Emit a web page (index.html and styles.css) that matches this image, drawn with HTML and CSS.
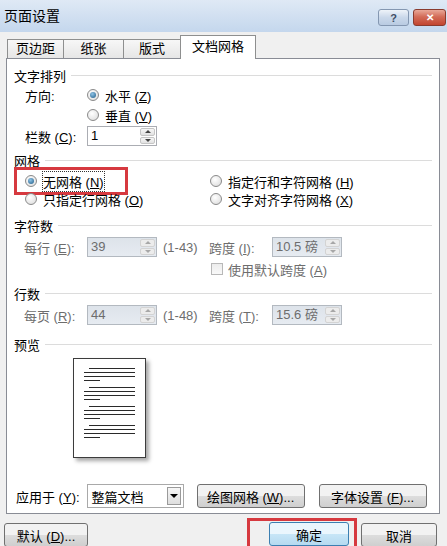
FILE: index.html
```html
<!DOCTYPE html>
<html lang="zh-CN">
<head>
    <meta charset="UTF-8">
    <title>页面设置</title>
    <link rel="stylesheet" href="styles.css">
</head>
<body>
<div class="dialog">
    <div class="titlebar">
        <span class="title">页面设置</span>
        <div class="caps">
            <span class="cap help">?</span>
            <span class="cap close">&#x2715;</span>
        </div>
    </div>

    <div class="tabs">
        <span class="tab tab-margins">页边距</span>
        <span class="tab tab-paper">纸张</span>
        <span class="tab tab-layout">版式</span>
        <span class="tab tab-grid active">文档网格</span>
    </div>

    <div class="panel">
        <div class="group-title">文字排列</div>
        <div class="row">
            <span class="label">方向:</span>
            <span class="option"><i class="radio checked"></i><span>水平 (<u>Z</u>)</span></span>
        </div>
        <div class="row">
            <span class="label"></span>
            <span class="option"><i class="radio"></i><span>垂直 (<u>V</u>)</span></span>
        </div>
        <div class="row row-field">
            <span class="label">栏数 (<u>C</u>):</span>
            <div class="spin">
                <span class="val">1</span>
                <span class="arrows"><i class="up"></i><i class="down"></i></span>
            </div>
        </div>

        <div class="group-title gap-grid">网格</div>
        <div class="grid-opts">
            <span class="highlight"><span class="option"><i class="radio checked"></i><span class="focus">无网格 (<u>N</u>)</span></span></span>
            <span class="option"><i class="radio"></i><span>指定行和字符网格 (<u>H</u>)</span></span>
            <span class="option"><i class="radio"></i><span>只指定行网格 (<u>O</u>)</span></span>
            <span class="option"><i class="radio"></i><span>文字对齐字符网格 (<u>X</u>)</span></span>
        </div>

        <div class="group-title gap-chars">字符数</div>
        <div class="metric disabled">
            <span>每行 (<u>E</u>):</span>
            <div class="spin off">
                <span class="val">39</span>
                <span class="arrows"><i class="up"></i><i class="down"></i></span>
            </div>
            <span class="range">(1-43)</span>
            <span>跨度 (<u>I</u>):</span>
            <div class="spin off">
                <span class="val">10.5 磅</span>
                <span class="arrows"><i class="up"></i><i class="down"></i></span>
            </div>
        </div>
        <div class="check-row disabled">
            <i class="checkbox"></i><span>使用默认跨度 (<u>A</u>)</span>
        </div>

        <div class="group-title gap-lines">行数</div>
        <div class="metric disabled">
            <span>每页 (<u>R</u>):</span>
            <div class="spin off">
                <span class="val">44</span>
                <span class="arrows"><i class="up"></i><i class="down"></i></span>
            </div>
            <span class="range">(1-48)</span>
            <span>跨度 (<u>T</u>):</span>
            <div class="spin off">
                <span class="val">15.6 磅</span>
                <span class="arrows"><i class="up"></i><i class="down"></i></span>
            </div>
        </div>

        <div class="group-title gap-preview">预览</div>
        <div class="page">
            <div class="para"><i class="ln first"></i><i class="ln"></i><i class="ln"></i><i class="ln last"></i></div>
            <div class="para"><i class="ln first"></i><i class="ln"></i><i class="ln"></i><i class="ln last"></i></div>
            <div class="para"><i class="ln first"></i><i class="ln"></i><i class="ln"></i><i class="ln last"></i></div>
            <div class="para"><i class="ln first"></i><i class="ln"></i><i class="ln"></i><i class="ln last"></i></div>
        </div>

        <div class="apply-row">
            <span>应用于 (<u>Y</u>):</span>
            <div class="select">
                <span class="val">整篇文档</span>
                <span class="drop"><i></i></span>
            </div>
            <button class="btn btn-wide">绘图网格 (<u>W</u>)...</button>
            <button class="btn btn-wide">字体设置 (<u>F</u>)...</button>
        </div>
    </div>

    <div class="footer">
        <button class="btn btn-default">默认 (<u>D</u>)...</button>
        <span class="highlight-ok"><button class="btn btn-ok">确定</button></span>
        <button class="btn btn-cancel">取消</button>
    </div>
</div>
</body>
</html>
```

FILE: styles.css
```css
* { margin: 0; padding: 0; box-sizing: border-box; }
body { font-family: "Liberation Sans", "Noto Sans CJK SC", sans-serif; font-size: 13px; color: #000; background: #f0f0f0; }
u { text-decoration: underline; }
i { font-style: normal; display: block; }

.dialog { width: 447px; height: 546px; background: #f0f0f0; display: flex; flex-direction: column; overflow: hidden; }

/* title bar */
.titlebar { height: 32px; flex-shrink: 0; display: flex; justify-content: space-between; background: linear-gradient(#dfe9f5, #c4d7ed); padding-left: 4px; }
.title { font-size: 14px; line-height: 32px; }
.caps { display: flex; gap: 4px; margin-top: 9px; margin-right: 1px; }
.cap { height: 17px; border-radius: 3px; display: flex; align-items: center; justify-content: center; font-size: 11px; font-weight: bold; }
.help { width: 31px; border: 1px solid #8497b1; background: linear-gradient(#eef3f9, #cad8ea 50%, #b9cbe2); color: #3f4e66; }
.close { width: 33px; border: 1px solid #8a3b2e; background: linear-gradient(#e9a898, #d36c58 45%, #c2452f); color: #fff; font-size: 10px; }

/* tabs */
.tabs { height: 26px; flex-shrink: 0; display: flex; align-items: flex-end; padding-left: 7px; }
.tab { height: 19px; border: 1px solid #8e8f8f; border-bottom: none; margin-right: -1px; background: linear-gradient(#f7f7f7, #e6e6e6); text-align: center; line-height: 18px; }
.tab-margins { width: 57px; }
.tab-paper { width: 61px; }
.tab-layout { width: 58px; }
.tab-grid { width: 76px; }
.tab.active { height: 24px; background: #fff; margin-bottom: -1px; line-height: 22px; position: relative; z-index: 1; }

/* panel */
.panel { margin-left: 6px; width: 434px; height: 456px; flex-shrink: 0; border: 1px solid #898c95; background: #fff; padding: 6px 7px 5px 7px; display: flex; flex-direction: column; }
.group-title { height: 20px; display: flex; align-items: center; }
.group-title::after { content: ""; flex: 1; border-top: 1px solid #dcdcdc; margin-left: 5px; }
.gap-grid { margin-top: 3px; }
.gap-chars { margin-top: 7px; }
.gap-lines { margin-top: 4px; }
.gap-preview { margin-top: 8px; }

.row { height: 20px; display: flex; align-items: center; padding-left: 11px; }
.row:first-of-type { margin-top: 1px; }
.row-field { height: 22px; }
.label { width: 62px; }

.option { display: flex; align-items: center; gap: 6px; white-space: nowrap; }
.radio { width: 12px; height: 12px; border-radius: 50%; border: 1px solid #8a8a8a; background: radial-gradient(circle at 40% 35%, #fff, #d9d9d9); display: flex; align-items: center; justify-content: center; flex-shrink: 0; }
.radio.checked::after { content: ""; width: 6px; height: 6px; border-radius: 50%; background: radial-gradient(circle at 40% 35%, #8ec3e6, #1f5b86); }

.grid-opts { display: grid; grid-template-columns: 185px 1fr; grid-auto-rows: 18px; align-items: center; padding-left: 11px; margin-top: 2px; }
.highlight { display: flex; align-items: center; width: 114px; height: 28px; margin-left: -11px; border: 3px solid #d6393f; padding-left: 8px; }
.focus { outline: 1px dotted #333; outline-offset: 0; }

/* spin boxes */
.spin { width: 70px; height: 20px; border: 1px solid #abadb3; display: flex; background: #fff; }
.spin .val { flex: 1; padding-left: 3px; line-height: 18px; white-space: nowrap; }
.arrows { width: 17px; display: flex; flex-direction: column; gap: 1px; padding: 1px; }
.arrows i { flex: 1; border: 1px solid #c5c5c5; border-radius: 2px; background: linear-gradient(#f6f6f6, #e2e2e2); display: flex; align-items: center; justify-content: center; }
.arrows .up::after { content: ""; border-left: 3px solid transparent; border-right: 3px solid transparent; border-bottom: 3px solid #444; }
.arrows .down::after { content: ""; border-left: 3px solid transparent; border-right: 3px solid transparent; border-top: 3px solid #444; }
.spin.off { background: linear-gradient(#dde3ea, #e6ebf1); border-color: #b3b9c0; }
.spin.off .arrows i { background: #ececec; border-color: #d3d3d3; }
.spin.off .arrows .up::after { border-bottom-color: #a7a7a7; }
.spin.off .arrows .down::after { border-top-color: #a7a7a7; }

.disabled { color: #6d6d6d; }
.metric { height: 22px; margin-top: 1px; display: grid; grid-template-columns: 63px 70px 52px 63px 70px; align-items: center; padding-left: 10px; }
.range { padding-left: 6px; }

.check-row { height: 20px; margin-top: 1px; display: flex; align-items: center; gap: 5px; padding-left: 197px; }
.checkbox { width: 12px; height: 12px; border: 1px solid #b8b8b8; background: linear-gradient(#ececec, #f9f9f9); }

/* preview */
.page { margin-top: 4px; margin-left: 59px; width: 73px; height: 100px; border: 1px solid #3c3c3c; background: #fff; box-shadow: 3px 3px 4px rgba(0, 0, 0, 0.35); padding: 9px 10px 0 10px; }
.para { margin-bottom: 6px; }
.ln { height: 1px; background: #2a2a2a; margin-bottom: 3px; }
.ln.first { margin-left: 5px; }
.ln.last { width: 16px; }

/* bottom row */
.apply-row { margin-top: auto; height: 24px; display: flex; align-items: center; padding-left: 2px; }
.select { margin-left: 7px; width: 97px; height: 24px; border: 1px solid #a9a9a9; display: flex; align-items: center; padding: 2px; }
.select .val { flex: 1; padding-left: 2px; }
.drop { width: 14px; height: 18px; border: 1px solid #9a9a9a; background: linear-gradient(#f6f6f6, #dedede); display: flex; align-items: center; justify-content: center; }
.drop i { border-left: 4px solid transparent; border-right: 4px solid transparent; border-top: 4px solid #000; }

.btn { font-family: inherit; font-size: 13px; color: #000; height: 24px; border: 1px solid #707070; border-radius: 3px; background: linear-gradient(#f2f2f2 50%, #dddddd 50%, #cfcfcf); }
.btn-wide { width: 108px; margin-left: 13px; }
.btn-wide + .btn-wide { margin-left: 14px; }

/* footer */
.footer { flex: 1; display: flex; align-items: flex-start; padding-top: 9px; }
.btn-default { margin-left: 4px; width: 84px; }
.highlight-ok { margin-left: 159px; margin-top: -5px; border: 3px solid #d6393f; padding: 1px 5px 0 19px; height: 40px; }
.btn-ok { width: 80px; border-color: #3c7fb1; background: linear-gradient(#eaf6fd 50%, #c7e6f7 50%, #b6daf0); }
.btn-cancel { margin-left: 4px; width: 76px; }
```
